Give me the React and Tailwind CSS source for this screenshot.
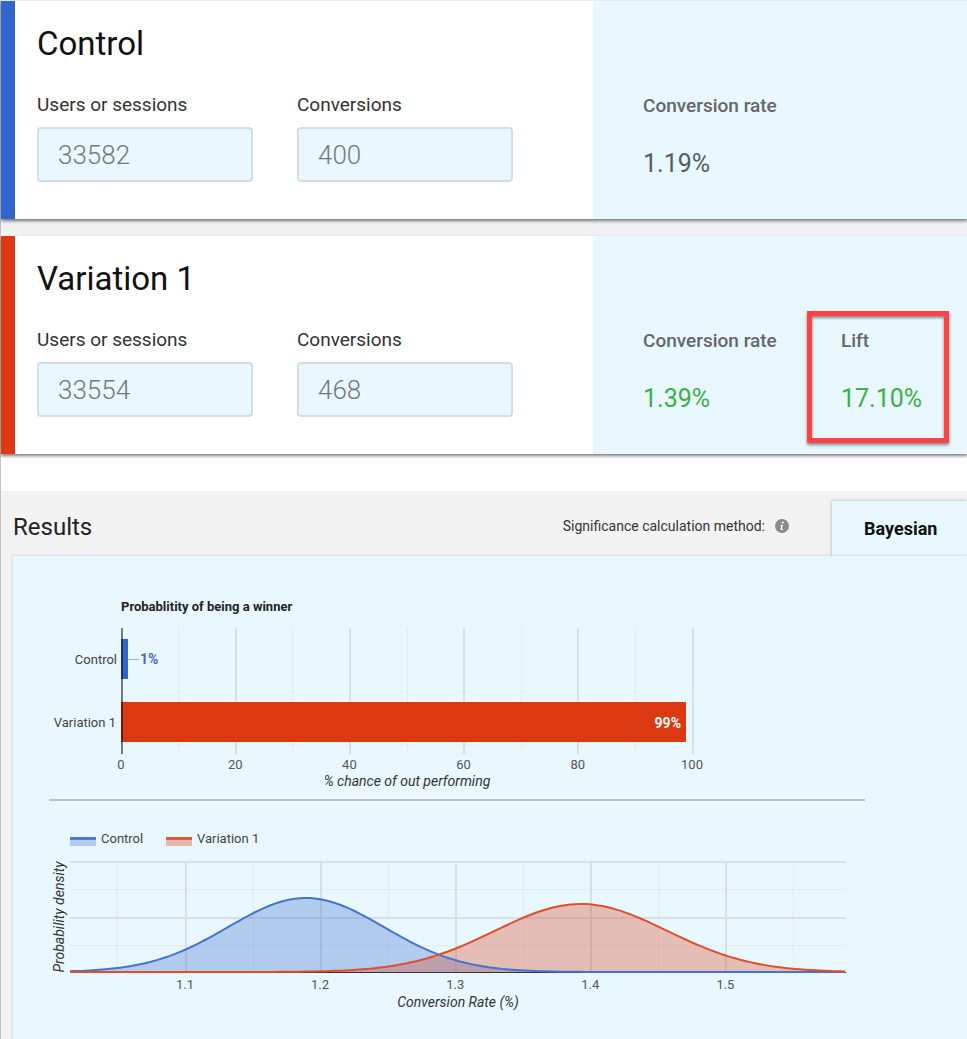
import { useState } from 'react';

const variants = [
  { id: 'control', name: 'Control', users: '33582', conversions: '400', rate: '1.19%', stripe: 'bg-[#3366cc]', rateColor: 'text-[#555b5e]' },
  { id: 'variation-1', name: 'Variation 1', users: '33554', conversions: '468', rate: '1.39%', lift: '17.10%', stripe: 'bg-[#dc3912]', rateColor: 'text-[#3bb143]' },
];

function NumberField({ id, label, initial }) {
  const [value, setValue] = useState(initial);
  return (
    <div className="w-[216px]">
      <label htmlFor={id} className="block text-[19px] leading-6 text-[#333]">{label}</label>
      <input
        id={id}
        type="text"
        inputMode="numeric"
        value={value}
        onChange={(e) => setValue(e.target.value)}
        className="mt-2.5 block h-[55px] w-full rounded border-2 border-[#d3dfe4] bg-[#e8f8fe] px-[19px] text-[26px] font-light text-[#777] outline-none focus:border-[#3366cc]"
      />
    </div>
  );
}

function VariantCard({ variant }) {
  return (
    <section className="flex bg-white shadow-[0_2px_3px_rgba(0,0,0,0.5)]">
      <div className={`w-3.5 shrink-0 ${variant.stripe}`} />
      <div className="grid grow grid-cols-[578fr_374fr]">
        <div className="px-[22px] pt-[23px] pb-[37px]">
          <h2 className="text-[33px] leading-10 text-[#111]">{variant.name}</h2>
          <div className="mt-[29px] flex gap-11">
            <NumberField id={`${variant.id}-users`} label="Users or sessions" initial={variant.users} />
            <NumberField id={`${variant.id}-conversions`} label="Conversions" initial={variant.conversions} />
          </div>
        </div>
        <dl className="flex bg-[#e8f8fe] pt-[93px] pl-[50px]">
          <div className="w-[198px]">
            <dt className="text-[19px] leading-6 font-medium text-[#666]">Conversion rate</dt>
            <dd className={`mt-7 text-[25px] leading-9 ${variant.rateColor}`}>{variant.rate}</dd>
          </div>
          {variant.lift && (
            <div className="relative self-start">
              <dt className="text-[19px] leading-6 font-medium text-[#666]">Lift</dt>
              <dd className={`mt-7 text-[25px] leading-9 ${variant.rateColor}`}>{variant.lift}</dd>
              <div className="pointer-events-none absolute -top-[18px] -right-[27px] -bottom-[26px] -left-[34px] border-[5px] border-[#fb4345] shadow-[0_2px_3px_rgba(0,0,0,0.45),inset_0_2px_3px_rgba(0,0,0,0.45)]" />
            </div>
          )}
        </dl>
      </div>
    </section>
  );
}

// --- Probability bars ---
const BAR_X = 72;
const BAR_WIDTH = 571;
const barX = (pct) => BAR_X + (pct / 100) * BAR_WIDTH;

function WinnerChart() {
  return (
    <svg viewBox="0 0 816 209" className="block w-full max-w-[816px]" role="img" aria-label="Probability of being a winner">
      <text x={BAR_X} y="21" className="fill-[#222] text-[13px] font-bold">Probablitity of being a winner</text>
      {[10, 30, 50, 70, 90].map((t) => (
        <rect key={t} x={Math.round(barX(t))} y="38" width="1" height="126" className="fill-[#e4ebed]" />
      ))}
      {[20, 40, 60, 80, 100].map((t) => (
        <rect key={t} x={Math.floor(barX(t))} y="38" width="2" height="126" className="fill-[#d8e0e2]" />
      ))}
      <rect x={BAR_X} y="49" width="7" height="40" className="fill-[#3366cc]" />
      <rect x={BAR_X} y="112" width="565" height="40" className="fill-[#dc3912]" />
      <rect x={BAR_X} y="38" width="2" height="126" className="fill-black/50" />
      <rect x="79" y="69" width="11" height="1" className="fill-[#aaa]" />
      <text x="91" y="74" className="fill-[#4668c5] text-[14px] font-bold">1%</text>
      <text x="632" y="138" textAnchor="end" className="fill-white text-[14px] font-bold">99%</text>
      <text x="68" y="74" textAnchor="end" className="fill-[#444] text-[13px]">Control</text>
      <text x="67" y="137" textAnchor="end" className="fill-[#444] text-[13px]">Variation 1</text>
      {[0, 20, 40, 60, 80, 100].map((t) => (
        <text key={t} x={barX(t)} y="179" textAnchor="middle" className="fill-[#555] text-[13px]">{t}</text>
      ))}
      <text x="358" y="196" textAnchor="middle" className="fill-[#333] text-[14px] italic">% chance of out performing</text>
    </svg>
  );
}

// --- Density curves ---
const BASE_Y = 171;
const rateX = (rate) => 136 + (rate - 1.1) * 1351;

function curvePoints(center, sigma, peak) {
  const points = [];
  for (let x = 21; x <= 796; x += 5) {
    const y = BASE_Y - peak * Math.exp(-((x - center) ** 2) / (2 * sigma ** 2));
    points.push(`${x},${y.toFixed(2)}`);
  }
  return points.join(' ');
}

const controlCurve = curvePoints(257, 78, 74);
const variationCurve = curvePoints(532, 86, 68);

function DensityChart() {
  return (
    <svg viewBox="0 0 816 238" className="block w-full max-w-[816px]" role="img" aria-label="Conversion rate probability density">
      <rect x="21" y="37" width="26" height="8" className="fill-[#b2cbf0]" />
      <rect x="21" y="36" width="26" height="3" className="fill-[#4f7bd6]" />
      <text x="52" y="42" className="fill-[#444] text-[13px]">Control</text>
      <rect x="117" y="37" width="26" height="8" className="fill-[#e8b9b1]" />
      <rect x="117" y="36" width="26" height="3" className="fill-[#e2573a]" />
      <text x="148" y="42" className="fill-[#444] text-[13px]">Variation 1</text>

      {[1.05, 1.15, 1.25, 1.35, 1.45, 1.55].map((r) => (
        <rect key={r} x={Math.round(rateX(r))} y="60" width="1" height="111" className="fill-[#e4ebed]" />
      ))}
      {[88, 144].map((y) => (
        <rect key={y} x="21" y={y} width="776" height="1" className="fill-[#e4ebed]" />
      ))}
      {[1.1, 1.2, 1.3, 1.4, 1.5].map((r) => (
        <rect key={r} x={Math.floor(rateX(r))} y="60" width="2" height="111" className="fill-[#d8e0e2]" />
      ))}
      {[60, 116].map((y) => (
        <rect key={y} x="21" y={y} width="776" height="2" className="fill-[#d8e0e2]" />
      ))}
      <rect x="21" y="171" width="776" height="1" className="fill-[#333]" />

      <polygon points={`21,${BASE_Y} ${controlCurve} 796,${BASE_Y}`} className="fill-[#3366cc]/30" />
      <polygon points={`21,${BASE_Y} ${variationCurve} 796,${BASE_Y}`} className="fill-[#dc3912]/30" />
      <polyline points={controlCurve} className="fill-none stroke-[#4573d2] stroke-2" />
      <polyline points={variationCurve} className="fill-none stroke-[#e04e2c] stroke-2" />

      {[1.1, 1.2, 1.3, 1.4, 1.5].map((r) => (
        <text key={r} x={rateX(r)} y="188" textAnchor="middle" className="fill-[#555] text-[13px]">{r}</text>
      ))}
      <text x="409" y="206" textAnchor="middle" className="fill-[#333] text-[14px] italic">Conversion Rate (%)</text>
      <text transform="translate(15 116) rotate(-90)" textAnchor="middle" className="fill-[#333] text-[14px] italic">Probability density</text>
    </svg>
  );
}

function InfoIcon() {
  return (
    <svg viewBox="0 0 14 14" className="size-3.5" aria-hidden="true">
      <circle cx="7" cy="7" r="7" className="fill-[#8b8b8b]" />
      <circle cx="7.8" cy="3.6" r="1.1" className="fill-white" />
      <path d="M5.6 5.9h2.3L7 10h.9v1H5.4l.9-4.1h-.7z" className="fill-white" />
    </svg>
  );
}

export default function App() {
  return (
    <div className="min-h-screen border-l border-[#c4c4c4] bg-white font-[Roboto,sans-serif]">
      <div className="flex flex-col gap-[17px] bg-[#f1f1f1] pt-px">
        {variants.map((v) => (
          <VariantCard key={v.id} variant={v} />
        ))}
      </div>

      <section className="mt-[37px] bg-[#f3f3f3] pl-3">
        <header className="flex items-end pt-2.5">
          <h2 className="grow pb-[11px] text-[24px] leading-9 text-[#222]">Results</h2>
          <div className="flex items-center gap-2.5 pb-5 text-[14px] leading-5 text-[#333]">
            <span>Significance calculation method:</span>
            <button type="button" aria-label="About the calculation method">
              <InfoIcon />
            </button>
          </div>
          <button type="button" className="ml-[43px] h-[55px] w-[135px] bg-[#e8f8fe] pl-8 text-left text-[18px] font-bold text-[#111] shadow-[0_0_3px_rgba(0,0,0,0.3)]">
            Bayesian
          </button>
        </header>
        <div className="relative bg-[#e8f8fe] pt-[34px] pl-9 shadow-[0_0_3px_rgba(0,0,0,0.2)]">
          <WinnerChart />
          <hr className="max-w-[816px] border-t-2 border-[#c0c4c5]" />
          <DensityChart />
        </div>
      </section>
    </div>
  );
}
